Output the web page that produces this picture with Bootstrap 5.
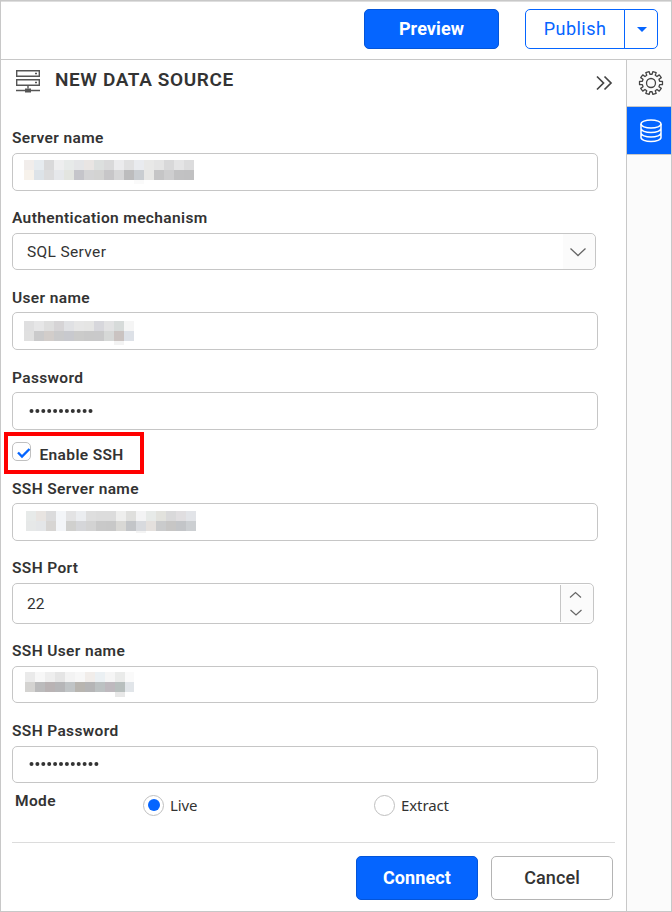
<!DOCTYPE html>
<html lang="en">
<head>
<meta charset="utf-8">
<meta name="viewport" content="width=device-width, initial-scale=1">
<title>New Data Source</title>
<link href="https://cdn.jsdelivr.net/npm/bootstrap@5.3.0/dist/css/bootstrap.min.css" rel="stylesheet">
<style>
body{font-family:Roboto,"Liberation Sans",sans-serif;color:#333;background:#fff}
.app{width:672px;height:912px;border:1px solid #c8c8c8;overflow:hidden}
.topbar{height:59px;border-top:1px solid #dedede;border-bottom:1px solid #c8c8c8;padding:7px 13px 0 0;gap:26px}
.btn{--bs-btn-border-radius:5px;--bs-btn-font-size:18px;--bs-btn-line-height:20px;--bs-btn-padding-x:0;--bs-btn-padding-y:0;letter-spacing:.1px}
.btn-primary{--bs-btn-bg:#0565ff;--bs-btn-border-color:#0455d9;--bs-btn-font-weight:700}
.btn-outline-primary{--bs-btn-color:#0565ff;--bs-btn-border-color:#0565ff;letter-spacing:.45px}
.btn-preview{width:135px;height:40px}
.btn-publish{width:100px}.btn-arrow{width:34px;padding-left:2px}
.publish-group{height:40px}
.btn-foot{width:122px;height:44px}
.btn-cancel{--bs-btn-color:#333;--bs-btn-border-color:#b4b4b4;--bs-btn-font-weight:500;--bs-btn-bg:#fff}
.panel{width:625px;padding-left:11px}
.panel-head{height:68px;padding:8px 13px 0 3px}
.panel-title{font-size:19px;line-height:24px;font-weight:600;letter-spacing:.6px;margin:0 0 0 14px}
.field{margin-bottom:17px}
.field-tall{padding-top:1px}
.field-label{display:block;height:20px;line-height:20px;font-size:15.5px;font-weight:600;letter-spacing:.36px;white-space:nowrap;margin-bottom:4px}
.label-gap{margin-bottom:5px}
.box{border:1px solid #c6c6c6;border-radius:5px;width:586px;height:38px;background:#fff;font-size:15.5px}
.box-short{height:37px}
.box-select{width:584px;height:37px;padding-left:14px;letter-spacing:.35px}
.select-value{padding-top:2px}
.box-number{width:582px;height:41px;padding-left:14px}
.number-value{padding-top:2px}
.select-arrow{width:32px;padding-right:2px;background:#fbfbfb;border-radius:0 5px 5px 0}
.spinner{width:33px;margin:1px 0;border-left:1px solid #c6c6c6;background:#fbfbfb;border-radius:0 5px 5px 0}
.ssh-toggle{width:140px;height:42px;border:4px solid #f00;margin:2px 0 5px -8px;padding:6px 0 0 4px}
.tick{width:19px;height:19px;border:1px solid #c0c0c0;border-radius:5px}
.toggle-label{font-size:15.5px;line-height:20px;font-weight:600;letter-spacing:.36px;margin:3px 0 0 8.5px}
.mode-row{height:60px;width:603px;border-bottom:1px solid #dcdcdc}
.mode-label{width:131px;padding-left:3px;margin-top:8px}
.mode-option{width:231px;height:20px;margin-top:12px;font:15px/20px "Noto Sans","Open Sans",sans-serif;letter-spacing:-.1px}
.radio-ring{width:21px;height:21px;border:1px solid #bfbfbf;border-radius:50%;margin-right:6px}
.radio-dot{width:12px;height:12px;border-radius:50%;background:#0565ff}
.foot{padding:13px 13px 0 0;gap:13px}
.rail{width:45px;border-left:1px solid #c8c8c8;background:#fbfbfb}
.rail-item{height:47px;border-bottom:1px solid #c8c8c8;padding-left:4px}
.rail-item.on{background:#0565ff;height:48px}
svg{display:block;flex:none}
</style>
</head>
<body>
<div class="app d-flex flex-column">
  <header class="topbar d-flex justify-content-end flex-shrink-0">
    <button class="btn btn-primary btn-preview">Preview</button>
    <div class="btn-group publish-group">
      <button class="btn btn-outline-primary btn-publish flex-grow-0">Publish</button>
      <button class="btn btn-outline-primary btn-arrow flex-grow-0 d-flex align-items-center justify-content-center" aria-label="More"><svg width="10" height="5"><path d="M0 0h10L5 5z" fill="#0565ff"/></svg></button>
    </div>
  </header>
  <div class="d-flex flex-grow-1">
    <main class="panel">
      <div class="panel-head d-flex align-items-start">
        <svg width="26" height="26" fill="none" stroke="#555" stroke-width="1.4"><path d="M1.7 2.7h22.6v5.6H1.7zM1.7 11.7h22.6v5.6H1.7zM1 22.5h24M13 17.5v3"/><path d="M20 5.5h2M20 14.5h2" stroke-width="1.6"/><path d="M10 20.5h6v4h-6z" fill="#555" stroke="none"/></svg>
        <h1 class="panel-title">NEW DATA SOURCE</h1>
        <svg class="ms-auto" width="18" height="28" fill="none" stroke="#444" stroke-width="1.7"><path d="M2 8.5 8.5 15 2 21.5M9.5 8.5 16 15l-6.5 6.5"/></svg>
      </div>
      <div class="field"><label class="field-label label-gap">Server name</label><div class="box"><svg data-mosaic="server"></svg></div></div>
      <div class="field"><label class="field-label label-gap">Authentication mechanism</label>
        <div class="box box-select d-flex align-items-stretch"><span class="select-value align-self-center">SQL Server</span>
          <span class="select-arrow ms-auto d-flex align-items-center justify-content-center"><svg width="18" height="10" fill="none" stroke="#666" stroke-width="1.3"><path d="m1.5 1.5 7.5 7 7.5-7"/></svg></span></div></div>
      <div class="field field-tall"><label class="field-label">User name</label><div class="box"><svg data-mosaic="user"></svg></div></div>
      <div class="field mb-0 field-tall"><label class="field-label">Password</label><div class="box"><svg width="90" height="36" fill="#333" data-dots="11"></svg></div></div>
      <div class="ssh-toggle d-flex align-items-start">
        <span class="tick"><svg width="19" height="18" fill="none" stroke="#0565ff" stroke-width="2.4"><path d="m5 9.5 4 4 7.5-7.5"/></svg></span>
        <label class="toggle-label">Enable SSH</label>
      </div>
      <div class="field"><label class="field-label">SSH Server name</label><div class="box"><svg data-mosaic="sshServer"></svg></div></div>
      <div class="field"><label class="field-label label-gap">SSH Port</label>
        <div class="box box-number d-flex"><span class="number-value align-self-center">22</span>
          <span class="spinner ms-auto d-flex"><svg width="30" height="37" fill="none" stroke="#666" stroke-width="1.2"><path d="m9 12.500 5.500-5 5.500 5M9.500 25l5.500 5 5.500-5"/></svg></span></div></div>
      <div class="field"><label class="field-label label-gap">SSH User name</label><div class="box box-short"><svg data-mosaic="sshUser"></svg></div></div>
      <div class="field mb-0 field-tall"><label class="field-label label-gap">SSH Password</label><div class="box box-short"><svg width="90" height="35" fill="#333" data-dots="12"></svg></div></div>
      <div class="mode-row d-flex align-items-start">
        <span class="field-label mode-label">Mode</span>
        <span class="mode-option d-flex align-items-center"><span class="radio-ring d-flex align-items-center justify-content-center"><span class="radio-dot"></span></span>Live</span>
        <span class="mode-option d-flex align-items-center"><span class="radio-ring"></span>Extract</span>
      </div>
      <div class="foot d-flex justify-content-end">
        <button class="btn btn-primary btn-foot">Connect</button>
        <button class="btn btn-cancel btn-foot">Cancel</button>
      </div>
    </main>
    <aside class="rail">
      <div class="rail-item d-flex align-items-center justify-content-center"><svg id="gear" width="26" height="26" viewBox="-13 -13 26 26" fill="none" stroke="#444" stroke-width="1.3"><circle r="4.5"/></svg></div>
      <div class="rail-item on d-flex align-items-center justify-content-center"><svg width="24" height="26" fill="none" stroke="#fff" stroke-width="1.5"><ellipse cx="12" cy="6" rx="10" ry="4"/><path d="M2 6v13.500c0 2.200 4.500 4 10 4s10-1.800 10-4V6M2 10.500c0 2.200 4.500 4 10 4s10-1.800 10-4M2 15c0 2.200 4.500 4 10 4s10-1.800 10-4"/></svg></div>
    </aside>
  </div>
</div>
<script src="https://cdn.jsdelivr.net/npm/bootstrap@5.3.0/dist/js/bootstrap.bundle.min.js"></script>
<script>
const NS='http://www.w3.org/2000/svg';
function add(svg,tag,attrs){const e=document.createElementNS(NS,tag);for(const k in attrs)e.setAttribute(k,attrs[k]);svg.append(e)}
/* Redacted values: left offset, top offset, colour rows of 10px tiles, short tail tile */
const mosaics={
 server:{x:11,y:6,rows:['f1edeb e6ebef d9d9da eeeeef e7eae9 e4e5e7 e9e5e3 dcdfde d9d9da ebebed e0e0e1 e9ebef e8e8e7 e4e4e4 d8d8d9 e4e4e5 dcdcdd','f7f2eb dde3e8 dcdcdd e6e8eb e3e5e0 c5c5ca d4d4d5 d3d3d2 c7c6c8 d6d6d7 bcbcbd c9cdd1 e7e7e5 c5c5c6 cececf c2c2c3 c1c1c2'],tail:[11,4,'fafafa']},
 user:{x:11,y:8,rows:['dfdfe0 e6e6e7 dedede d6d4d6 e0e1e4 e6e6e6 e5e5e4 d7d7dc e2e2e3 d7dbda f5f5f5','e0e0e0 cacacb d2cdca cacacb c8c9ce cbcbca c9c9c9 c9c9ca d6d8d7 cac3c1 dde1e7'],tail:[9,4,'f3f3f3']},
 sshServer:{x:13,y:7,rows:['e7eae9 e8e4e1 dbdbdc f3f5f8 e3e3e4 ebedf0 dedede dcdcdc dcdcdc eeeeed dfdfdd f3f3f4 e7eae8 e2e2dd d9d9da e0dee0 e2e4e8','e6e8e8 e4e6e8 d7d5d3 f3f5f8 d0d0ce d5d6d9 d3d3d3 c9c9c9 c8c8c8 d9d8d5 c3c5c8 d8dade e4e0dd cacbcc c7c6c5 c3c5c8 cccfd2'],tail:[11,2,'f4f4f4']},
 sshUser:{x:12,y:5,last:9,rows:['eaeaea f7f7f7 eeeeee e5e5e5 f3f3f3 f7f7f7 f1edea ebf0f3 f5f5f5 eaebea fafafa','d4d3d1 bbbbbc b9b3b4 b6b6b8 c0c4c6 b8b5b0 b5b5b6 bcc1c2 beb9be b8bfbe e1e5e9'],tail:[9,5,'e8e8e8']}
};
document.querySelectorAll('[data-mosaic]').forEach(s=>{
 const m=mosaics[s.dataset.mosaic];s.setAttribute('width',190);s.setAttribute('height',35);s.setAttribute('shape-rendering','crispEdges');
 m.rows.forEach((r,j)=>r.split(' ').forEach((c,i,a)=>add(s,'rect',{x:m.x+i*10,y:m.y+j*10,width:i===a.length-1&&m.last||10,height:10,fill:'#'+c})));
 add(s,'rect',{x:m.x+m.tail[0]*10,y:m.y+20,width:10,height:m.tail[1],fill:'#'+m.tail[2]});
});
document.querySelectorAll('[data-dots]').forEach(s=>{for(let i=0;i<+s.dataset.dots;i++)add(s,'circle',{cx:18.5+i*5.9,cy:s.dataset.dots==='11'?18:17,r:2})});
/* Ten-toothed settings gear */
const pts=[];
for(let i=0;i<10;i++)[[-11,8.8],[-8.500,11.600],[8.500,11.600],[11,8.800]].forEach(([a,r])=>{const t=(i*36+a)*Math.PI/180;pts.push((r*Math.cos(t)).toFixed(2)+' '+(r*Math.sin(t)).toFixed(2))});
add(document.getElementById('gear'),'path',{d:'M'+pts.join('L')+'Z','stroke-linejoin':'round'});
</script>
</body>
</html>
